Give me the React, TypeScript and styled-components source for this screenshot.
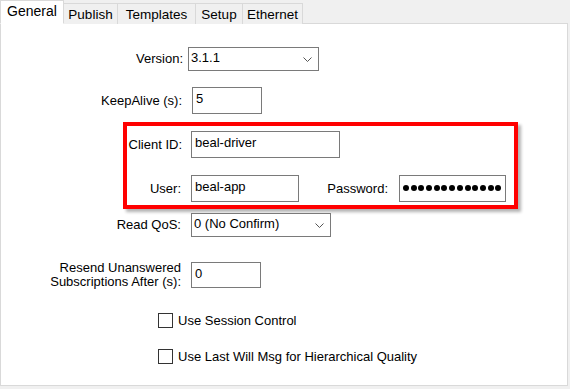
import React from 'react';
import styled, { createGlobalStyle } from 'styled-components';

const GlobalStyle = createGlobalStyle`
   * {
      box-sizing: border-box;
   }
   html, body {
      margin: 0;
      padding: 0;
      background: #f0f0f0;
      font-family: 'Liberation Sans', Arial, sans-serif;
      font-size: 13px;
      color: #000;
   }
`;

const Window = styled.div`
   width: 570px;
   height: 389px;
   background: #f0f0f0;
   display: flex;
   flex-direction: column;
`;

const TabStrip = styled.div`
   display: flex;
   align-items: flex-end;
   height: 24px;
   position: relative;
   z-index: 1;
`;

const Tab = styled.div<{ $active?: boolean; $width: number }>`
   width: ${(p) => p.$width}px;
   height: ${(p) => (p.$active ? '24px' : '21px')};
   padding-bottom: ${(p) => (p.$active ? '2px' : '0')};
   display: flex;
   align-items: center;
   justify-content: center;
   background: ${(p) => (p.$active ? '#fff' : '#f0f0f0')};
   border: 1px solid #d9d9d9;
   border-bottom: ${(p) => (p.$active ? '1px solid #fff' : 'none')};
   border-left: ${(p) => (p.$active ? '1px solid #d9d9d9' : 'none')};
   font-size: ${(p) => (p.$active ? '14px' : '13.5px')};
   white-space: nowrap;
   line-height: 15px;
`;

const Panel = styled.div`
   width: 568px;
   height: 363px;
   margin-top: -1px;
   background: #fff;
   border: 1px solid #d9d9d9;
   display: flex;
   flex-direction: column;
`;

const Row = styled.div<{ $top: number; $left?: number }>`
   display: flex;
   align-items: center;
   margin-top: ${(p) => p.$top}px;
   margin-left: ${(p) => p.$left ?? 0}px;
`;

const Label = styled.div<{ $width: number; $gap: number }>`
   width: ${(p) => p.$width}px;
   margin-right: ${(p) => p.$gap}px;
   text-align: right;
   line-height: 14px;
   white-space: nowrap;
`;

const TextBox = styled.div<{ $width: number; $height?: number }>`
   width: ${(p) => p.$width}px;
   height: ${(p) => p.$height ?? 27}px;
   border: 1px solid #7a7a7a;
   background: #fff;
   padding: 3px 3px 0 3px;
   line-height: 16px;
   white-space: nowrap;
   overflow: hidden;
`;

const Select = styled.div<{ $width: number }>`
   width: ${(p) => p.$width}px;
   height: 24px;
   border: 1px solid #7a7a7a;
   background: #fff;
   padding: 2px 6px 0 2px;
   display: flex;
   justify-content: space-between;
   line-height: 16px;
`;

const Chevron = styled.svg`
   width: 9px;
   height: 6px;
   margin-top: 7px;
`;

const GroupBox = styled.div`
   width: 395px;
   margin: 8px 0 0 122px;
   border: 4px solid #ff0000;
   box-shadow: 3px 3px 3px rgba(0, 0, 0, 0.3);
   padding: 5px 0 3px 0;
   display: flex;
   flex-direction: column;
`;

const Dots = styled.div`
   display: flex;
   gap: 1.7px;
   padding-top: 6px;
`;

const Dot = styled.span`
   width: 6px;
   height: 6px;
   border-radius: 50%;
   background: #000;
`;

const CheckRow = styled.label<{ $top: number }>`
   display: flex;
   align-items: center;
   margin: ${(p) => p.$top}px 0 0 157px;
   line-height: 15px;
`;

const Box = styled.span`
   width: 15px;
   height: 15px;
   border: 1px solid #333;
   background: #fff;
   margin-right: 5px;
`;

const SelectArrow = () => (
   <Chevron viewBox='0 0 9 6'>
      <polyline points='0.5,0.5 4.5,4.5 8.5,0.5' fill='none' stroke='#555' strokeWidth='1' />
   </Chevron>
);

const tabs = [
   { name: 'General', width: 64 },
   { name: 'Publish', width: 54 },
   { name: 'Templates', width: 78 },
   { name: 'Setup', width: 47 },
   { name: 'Ethernet', width: 60 },
];

const App = (): JSX.Element => {
   return (
      <Window>
         <GlobalStyle />
         <TabStrip>
            {tabs.map((t, i) => (
               <Tab key={t.name} $active={i === 0} $width={t.width}>
                  {t.name}
               </Tab>
            ))}
         </TabStrip>
         <Panel>
            <Row $top={23}>
               <Label $width={182} $gap={5}>Version:</Label>
               <Select $width={131}>
                  <span>3.1.1</span>
                  <SelectArrow />
               </Select>
            </Row>
            <Row $top={16}>
               <Label $width={181} $gap={10}>KeepAlive (s):</Label>
               <TextBox $width={70}>5</TextBox>
            </Row>
            <GroupBox>
               <Row $top={0}>
                  <Label $width={55} $gap={9}>Client ID:</Label>
                  <TextBox $width={149}>beal-driver</TextBox>
               </Row>
               <Row $top={17}>
                  <Label $width={54} $gap={10}>User:</Label>
                  <TextBox $width={108}>beal-app</TextBox>
                  <Label $width={89} $gap={11}>Password:</Label>
                  <TextBox $width={107}>
                     <Dots>
                        {Array.from({ length: 13 }).map((_, i) => (
                           <Dot key={i} />
                        ))}
                     </Dots>
                  </TextBox>
               </Row>
            </GroupBox>
            <Row $top={4}>
               <Label $width={180} $gap={10}>Read QoS:</Label>
               <Select $width={140}>
                  <span>0 (No Confirm)</span>
                  <SelectArrow />
               </Select>
            </Row>
            <Row $top={24}>
               <Label $width={180} $gap={10}>
                  Resend Unanswered
                  <br />
                  Subscriptions After (s):
               </Label>
               <TextBox $width={70} $height={26}>0</TextBox>
            </Row>
            <CheckRow $top={24}>
               <Box />
               Use Session Control
            </CheckRow>
            <CheckRow $top={21}>
               <Box />
               Use Last Will Msg for Hierarchical Quality
            </CheckRow>
         </Panel>
      </Window>
   );
};

export default App;
